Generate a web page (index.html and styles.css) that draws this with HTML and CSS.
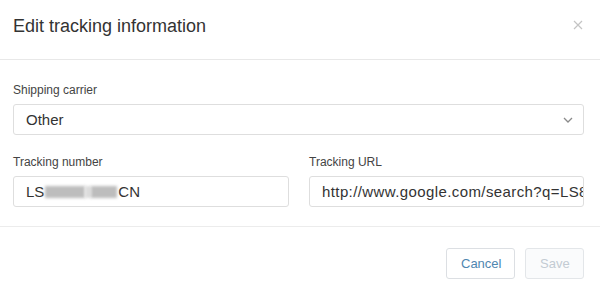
FILE: index.html
```html
<!DOCTYPE html>
<html lang="en">

<head>
    <meta charset="UTF-8">
    <meta name="viewport" content="width=device-width, initial-scale=1.0">
    <title>Edit tracking information</title>
    <link rel="stylesheet" href="styles.css">
</head>

<body>
    <div class="modal">
        <div class="modal-header">
            <h2 class="modal-title">Edit tracking information</h2>
            <span class="close-button">
                <svg width="10" height="10" viewBox="0 0 10 10">
                    <path d="M1 1 L9 9 M9 1 L1 9" stroke="#c4c4c4" stroke-width="1.2" fill="none" />
                </svg>
            </span>
        </div>

        <div class="modal-body">
            <div class="field">
                <label class="field-label">Shipping carrier</label>
                <div class="select-box">
                    <span class="select-value">Other</span>
                    <svg class="chevron" width="10" height="6" viewBox="0 0 10 6">
                        <polyline points="1,1 5,5 9,1" stroke="#8a8a8a" stroke-width="1.3" fill="none" />
                    </svg>
                </div>
            </div>

            <div class="field-row">
                <div class="field">
                    <label class="field-label">Tracking number</label>
                    <div class="text-input">
                        <span>LS</span>
                        <!-- redacted part of the number -->
                        <span class="redacted">
                            <span class="blur-block wide"></span>
                            <span class="blur-block light"></span>
                            <span class="blur-block narrow"></span>
                        </span>
                        <span>CN</span>
                    </div>
                </div>
                <div class="field">
                    <label class="field-label">Tracking URL</label>
                    <div class="text-input">
                        <span class="url-text">http://www.google.com/search?q=LS8</span>
                    </div>
                </div>
            </div>
        </div>

        <div class="modal-footer">
            <button class="btn btn-cancel">Cancel</button>
            <button class="btn btn-save" disabled>Save</button>
        </div>
    </div>
</body>

</html>
```

FILE: styles.css
```css
body {
    font-family: "Liberation Sans", Arial, sans-serif;
    margin: 0;
    background-color: #ffffff;
    color: #333333;
}

.modal {
    width: 600px;
    height: 295px;
    background-color: #ffffff;
}

.modal-header {
    height: 60px;
    box-sizing: border-box;
    padding: 0 16px 0 13px;
    display: flex;
    align-items: flex-start;
    justify-content: space-between;
    border-bottom: 1px solid #e8e8e8;
}

.modal-title {
    margin: 15px 0 0 0;
    font-size: 18px;
    font-weight: normal;
    line-height: 22px;
    color: #333333;
}

.close-button {
    margin-top: 20px;
    margin-right: 1px;
    display: flex;
}

.modal-body {
    padding: 22px 16px 19px 13px;
    border-bottom: 1px solid #ececec;
    display: flex;
    flex-direction: column;
    gap: 19px;
}

.field {
    display: flex;
    flex-direction: column;
    min-width: 0;
}

.field-label {
    font-size: 12px;
    line-height: 16px;
    color: #444444;
    margin-bottom: 6px;
}

.field-row {
    display: grid;
    grid-template-columns: 276px minmax(0, 1fr);
    gap: 20px;
}

.select-box,
.text-input {
    height: 31px;
    box-sizing: border-box;
    border: 1px solid #dedede;
    border-radius: 3px;
    padding: 0 12px;
    display: flex;
    align-items: center;
    font-size: 15px;
    color: #333333;
    overflow: hidden;
    white-space: nowrap;
}

.select-box {
    justify-content: space-between;
    padding-right: 10px;
}

.text-input {
    padding-right: 0;
}

.chevron {
    margin-top: 1px;
}

.redacted {
    display: flex;
    align-items: center;
    width: 72px;
    height: 12px;
    margin: 0 1px;
}

.blur-block {
    height: 12px;
    background-color: #bdbdbd;
    filter: blur(1.5px);
}

.blur-block.wide {
    width: 40px;
}

.blur-block.light {
    width: 6px;
    background-color: #dcdcdc;
}

.blur-block.narrow {
    width: 26px;
}

.url-text {
    color: #333333;
    letter-spacing: 0.4px;
}

.modal-footer {
    padding: 21px 16px 0 0;
    display: flex;
    justify-content: flex-end;
    gap: 10px;
}

.btn {
    height: 31px;
    box-sizing: border-box;
    border-radius: 3px;
    font-family: "Liberation Sans", Arial, sans-serif;
    font-size: 13px;
    padding: 0 14px;
    background-color: #ffffff;
    border: 1px solid #dcdfe3;
    cursor: pointer;
}

.btn-cancel {
    width: 69px;
    color: #4f86b0;
}

.btn-save {
    width: 59px;
    color: #c3cbd3;
    background-color: #fafbfc;
    border-color: #e3e6e9;
    cursor: default;
}
```
